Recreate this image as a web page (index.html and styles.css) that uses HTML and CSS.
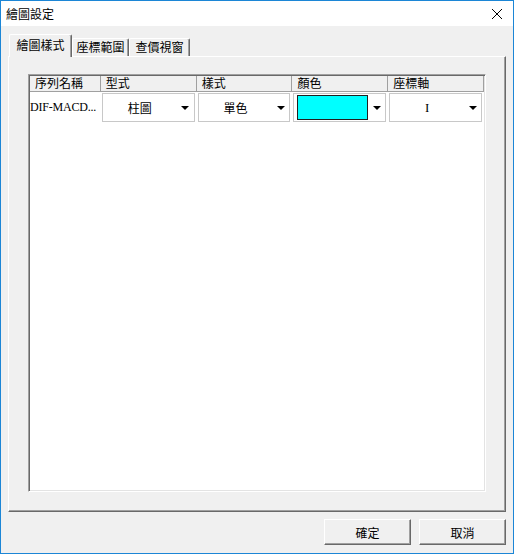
FILE: index.html
```html
<!DOCTYPE html>
<html lang="zh-Hant">
<head>
  <meta charset="UTF-8" />
  <title>繪圖設定</title>
  <link rel="stylesheet" href="styles.css">
</head>
<body>
  <div class="window">
    <div class="titlebar">
      <span class="title">繪圖設定</span>
      <svg class="close" width="12" height="12" viewBox="0 0 12 12">
        <path d="M1 1 L11 11 M11 1 L1 11" stroke="#000" stroke-width="1" fill="none"/>
      </svg>
    </div>
    <div class="dialog">
      <div class="tabs">
        <div class="tab active tab-1">繪圖樣式</div>
        <div class="tab tab-2">座標範圍</div>
        <div class="tab tab-3">查價視窗</div>
      </div>
      <div class="panel">
        <div class="grid">
          <div class="grid-head">
            <div class="hcell c1">序列名稱</div>
            <div class="hcell c2">型式</div>
            <div class="hcell c3">樣式</div>
            <div class="hcell c4">顏色</div>
            <div class="hcell c5">座標軸</div>
          </div>
          <div class="grid-row">
            <div class="cell c1 name">DIF-MACD...</div>
            <div class="cell c2">
              <div class="combo"><span class="combo-text">柱圖</span><span class="arrow"></span></div>
            </div>
            <div class="cell c3">
              <div class="combo"><span class="combo-text">單色</span><span class="arrow"></span></div>
            </div>
            <div class="cell c4">
              <div class="combo color-combo"><span class="swatch"></span><span class="arrow"></span></div>
            </div>
            <div class="cell c5">
              <div class="combo"><span class="combo-text latin">I</span><span class="arrow"></span></div>
            </div>
          </div>
        </div>
      </div>
      <div class="footer">
        <button class="btn">確定</button>
        <button class="btn">取消</button>
      </div>
    </div>
  </div>
</body>
</html>
```

FILE: styles.css
```css
* {
  box-sizing: border-box;
}

body {
  margin: 0;
  font-family: "Noto Sans CJK TC", "Liberation Sans", sans-serif;
  font-size: 12px;
  color: #000;
  background: #fff;
}

.window {
  width: 514px;
  height: 554px;
  border: 1px solid #1c86d6;
  display: flex;
  flex-direction: column;
}

.titlebar {
  height: 25px;
  background: #fff;
  display: flex;
  align-items: center;
  justify-content: space-between;
  padding: 0 10px 0 5px;
}

.title {
  line-height: 14px;
}

.close {
  display: block;
}

.dialog {
  flex: 1;
  background: #f0f0f0;
  display: flex;
  flex-direction: column;
}

/* tabs */
.tabs {
  height: 30px;
  display: flex;
  align-items: flex-end;
  padding-left: 8px;
}

.tab {
  height: 18px;
  line-height: 16px;
  text-align: center;
  border-top: 1px solid #fff;
  border-left: 1px solid #fff;
  border-right: 1px solid #696969;
  box-shadow: inset -1px 0 #a0a0a0;
  border-radius: 2px 2px 0 0;
}

.tab-1 { width: 63px; }
.tab-2 { width: 57px; }
.tab-3 { width: 61px; }

.tab.active {
  height: 23px;
  line-height: 20px;
  margin-bottom: -1px;
  background: #f0f0f0;
  position: relative;
  z-index: 1;
}

/* panel */
.panel {
  height: 456px;
  margin: 0 7px;
  border-top: 1px solid #fff;
  border-left: 1px solid #fff;
  border-right: 1px solid #696969;
  border-bottom: 1px solid #696969;
  box-shadow: inset -1px -1px #a0a0a0;
  padding: 17px 19px 19px 19px;
}

.grid {
  width: 458px;
  height: 418px;
  background: #fff;
  border-top: 1px solid #a0a0a0;
  border-left: 1px solid #a0a0a0;
  border-right: 1px solid #fff;
  border-bottom: 1px solid #fff;
  box-shadow: inset 1px 1px #696969, inset -1px -1px #e3e3e3;
  padding: 1px;
}

.grid-head {
  display: flex;
  height: 16px;
  border-bottom: 1px solid #a0a0a0;
  background: #f0f0f0;
}

.hcell {
  line-height: 14px;
  padding-left: 5px;
  border-right: 1px solid #a0a0a0;
  white-space: nowrap;
}

.c1 { width: 71px; }
.c2, .c3, .c4, .c5 { width: 96px; }

.grid-row {
  display: flex;
  height: 32px;
}

.cell {
  padding: 1px 2px 1px 1px;
}

.name {
  font-family: "Liberation Serif", serif;
  font-size: 12px;
  letter-spacing: -0.2px;
  line-height: 31px;
  padding: 0;
  white-space: nowrap;
}

.combo {
  height: 29px;
  border: 1px solid #c8c8c8;
  background: #fff;
  display: flex;
  align-items: center;
}

.combo-text {
  flex: 1;
  text-align: center;
}

.latin {
  font-family: "Liberation Serif", serif;
  font-size: 13px;
}

.arrow {
  width: 17px;
  display: flex;
  justify-content: center;
}

.arrow::before {
  content: "";
  border-left: 4px solid transparent;
  border-right: 4px solid transparent;
  border-top: 4px solid #000;
}

.color-combo {
  padding-left: 3px;
}

.swatch {
  flex: 1;
  height: 25px;
  background: #00ffff;
  border: 1px solid #202020;
}

/* buttons */
.footer {
  flex: 1;
  display: flex;
  justify-content: flex-end;
  align-items: flex-start;
  gap: 8px;
  padding: 7px 7px 0 0;
}

.btn {
  width: 87px;
  height: 26px;
  font-family: "Noto Sans CJK TC", "Liberation Sans", sans-serif;
  font-size: 12px;
  background: #f0f0f0;
  border-top: 1px solid #fff;
  border-left: 1px solid #fff;
  border-right: 1px solid #696969;
  border-bottom: 1px solid #696969;
  box-shadow: inset -1px -1px #a0a0a0;
  padding: 0;
}
```
